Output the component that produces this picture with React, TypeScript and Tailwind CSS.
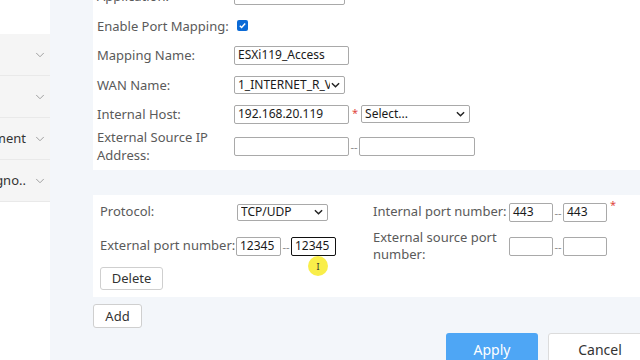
import { ChevronDown } from "lucide-react";

const font = { fontFamily: '"Noto Sans", "Open Sans", sans-serif' };

function Chevron({ className = "" }: { className?: string }) {
  return (
    <svg viewBox="0 0 10 6" className={`w-[9px] h-[6px] ${className}`}>
      <path d="M1 1l4 4 4-4" fill="none" stroke="#222" strokeWidth="1.6" />
    </svg>
  );
}

function TextBox({
  value = "",
  w,
  h = "h-[19px]",
  focused = false,
}: {
  value?: string;
  w: string;
  h?: string;
  focused?: boolean;
}) {
  return (
    <div
      className={`${w} ${h} flex items-center rounded-[2px] border bg-white px-[3px] text-[12px] text-[#1a1a1a] ${
        focused ? "border-[#111] border-[1.5px]" : "border-[#a9a9a9]"
      }`}
    >
      {value}
    </div>
  );
}

function SelectBox({ value, w, h = "h-[18px]" }: { value: string; w: string; h?: string }) {
  return (
    <div
      className={`${w} ${h} flex items-center justify-between rounded-[2px] border border-[#a9a9a9] bg-white pl-[3px] pr-[4px] text-[12px] text-[#1a1a1a] overflow-hidden`}
    >
      <span className="whitespace-nowrap overflow-hidden">{value}</span>
      <Chevron className="shrink-0 ml-[1px]" />
    </div>
  );
}

function Dash() {
  return <span className="w-[10px] text-center text-[11px] leading-none text-[#8c8c8c]">--</span>;
}

function Star() {
  return <span className="ml-[3px] text-[11px] leading-none text-[#e0483e] self-start mt-[2px]">*</span>;
}

function Row({ label, children, h = "h-[30px]" }: { label: React.ReactNode; children?: React.ReactNode; h?: string }) {
  return (
    <div className={`flex items-center ${h}`}>
      <div className="w-[137px] shrink-0 text-[13px] leading-[18px] text-[#5a5a5a]">{label}</div>
      <div className="flex items-center">{children}</div>
    </div>
  );
}

const sideItems = ["", "", "Device Management", "Network Diagno.."];

export default function App() {
  return (
    <div className="w-[640px] h-[360px] overflow-hidden flex bg-[#f3f6fa]" style={font}>
      {/* sidebar */}
      <div className="w-[50px] shrink-0 bg-white pt-[34px] overflow-hidden">
        {sideItems.map((t, i) => (
          <div
            key={i}
            className="h-[42px] flex items-center justify-end bg-[#f5f5f5] border-b border-[#e9e9e9] pr-[3px]"
          >
            <span className="whitespace-nowrap text-[13px] text-[#333]">{t}</span>
            <ChevronDown size={14} strokeWidth={1.6} className="ml-[7px] shrink-0 text-[#9a9a9a]" />
          </div>
        ))}
      </div>

      {/* main */}
      <div className="flex-1 pl-[43px] relative">
        <div className="bg-white -mt-[19px] pl-[4px] pb-[7px]">
          <Row label="Application:">
            <SelectBox value="Select..." w="w-[111px]" />
          </Row>
          <Row label="Enable Port Mapping:" h="h-[29px]">
            <span className="ml-[3px] w-[11px] h-[11px] rounded-[2px] bg-[#0b6ad6] flex items-center justify-center">
              <svg viewBox="0 0 10 10" className="w-[9px] h-[9px]">
                <path d="M2 5.2l2 2 4-4.4" fill="none" stroke="white" strokeWidth="1.6" />
              </svg>
            </span>
          </Row>
          <Row label="Mapping Name:">
            <TextBox value="ESXi119_Access" w="w-[115px]" />
          </Row>
          <Row label="WAN Name:" h="h-[29px]">
            <SelectBox value="1_INTERNET_R_VID" w="w-[111px]" />
          </Row>
          <Row label="Internal Host:">
            <TextBox value="192.168.20.119" w="w-[115px]" />
            <Star />
            <span className="w-[3px]" />
            <SelectBox value="Select..." w="w-[109px]" />
          </Row>
          <Row label={<>External Source IP<br />Address:</>} h="h-[34px]">
            <TextBox w="w-[115px]" />
            <Dash />
            <TextBox w="w-[116px]" />
          </Row>
        </div>

        <div className="bg-white mt-[25px] px-[7px] pt-[2px] pb-[7px]">
          <div className="flex">
            <div className="w-[273px]">
              <div className="flex items-center h-[30px]">
                <div className="w-[137px] text-[13px] text-[#5a5a5a]">Protocol:</div>
                <SelectBox value="TCP/UDP" w="w-[91px]" h="h-[17px]" />
              </div>
              <div className="flex items-center h-[38px]">
                <div className="w-[136px] text-[13px] text-[#5a5a5a]">External port number:</div>
                <TextBox value="12345" w="w-[45px]" />
                <Dash />
                <TextBox value="12345" w="w-[45px]" focused />
              </div>
            </div>
            <div>
              <div className="flex items-center h-[30px]">
                <div className="w-[136px] text-[13px] text-[#5a5a5a]">Internal port number:</div>
                <TextBox value="443" w="w-[44px]" />
                <Dash />
                <TextBox value="443" w="w-[44px]" />
                <Star />
              </div>
              <div className="flex items-center h-[38px]">
                <div className="w-[136px] text-[13px] leading-[17px] text-[#5a5a5a]">
                  External source port
                  <br />
                  number:
                </div>
                <TextBox w="w-[44px]" />
                <Dash />
                <TextBox w="w-[44px]" />
              </div>
            </div>
          </div>
          <button className="mt-[2px] h-[23px] w-[63px] rounded-[3px] border border-[#cfcfcf] bg-white text-[13px] text-[#333]">
            Delete
          </button>
        </div>

        <button className="mt-[7px] h-[24px] w-[49px] rounded-[3px] border border-[#cfcfcf] bg-white text-[13px] text-[#333]">
          Add
        </button>

        <div className="flex justify-end gap-[10px] mt-[5px] -mr-[12px]">
          <button className="h-[32px] w-[92px] rounded-[3px] bg-[#4ea6f5] text-[14px] text-white">Apply</button>
          <button className="h-[32px] w-[104px] rounded-[3px] border border-[#dcdcdc] bg-white text-[14px] text-[#333]">
            Cancel
          </button>
        </div>

        {/* cursor highlight */}
        <div className="absolute left-[258px] top-[256px] w-[20px] h-[20px] rounded-full bg-[#f7ea1c]/80 flex items-center justify-center">
          <span className="text-[9px] leading-none text-[#333]">I</span>
        </div>
      </div>
    </div>
  );
}
